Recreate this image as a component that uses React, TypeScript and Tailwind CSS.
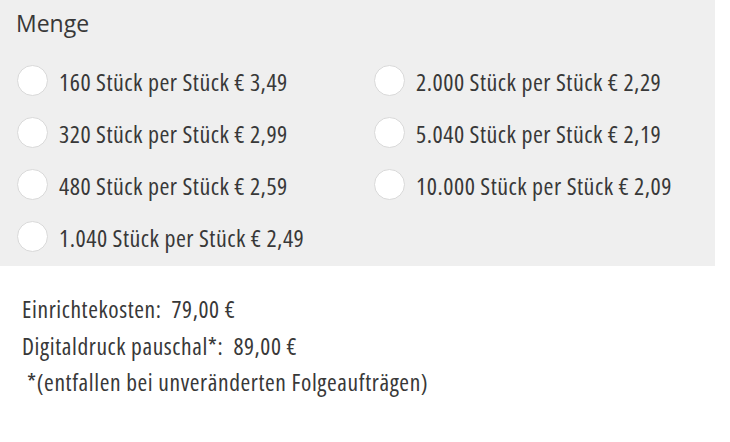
import React from "react";

const items: [string, string][] = [
  ["160 Stück per Stück € 3,49", "2.000 Stück per Stück € 2,29"],
  ["320 Stück per Stück € 2,99", "5.040 Stück per Stück € 2,19"],
  ["480 Stück per Stück € 2,59", "10.000 Stück per Stück € 2,09"],
  ["1.040 Stück per Stück € 2,49", ""],
];

function Option({ label }: { label: string }) {
  if (!label) return <div />;
  return (
    <label className="flex items-center h-[52px] cursor-pointer">
      <span className="w-[31px] h-[31px] rounded-full bg-white border border-[#d9d9d9] shrink-0" />
      <span className="ml-[11px] mt-[3px] text-[24px] tracking-[0.5px] font-stretch-condensed text-[#383838] whitespace-nowrap font-['Open_Sans',sans-serif]">
        {label}
      </span>
    </label>
  );
}

export default function App() {
  return (
    <div className="w-[730px] h-[442px] bg-white">
      <div className="w-[715px] h-[266px] bg-[#efefef] pl-[16px]">
        <div className="h-[54px] pt-[7px] text-[23px] leading-[32px] text-[#383838] font-['Open_Sans',sans-serif]">
          Menge
        </div>
        <div className="grid grid-cols-[357px_1fr] pl-px">
          {items.map(([a, b], i) => (
            <React.Fragment key={i}>
              <Option label={a} />
              <Option label={b} />
            </React.Fragment>
          ))}
        </div>
      </div>
      <div className="pl-[22px] pt-[25px] text-[23.5px] tracking-[0.6px] font-stretch-condensed leading-[36.5px] text-[#383838] font-['Open_Sans',sans-serif]">
        <div>Einrichtekosten:&nbsp; 79,00 €</div>
        <div>Digitaldruck pauschal*:&nbsp; 89,00 €</div>
        <div>&nbsp;*(entfallen bei unveränderten Folgeaufträgen)</div>
      </div>
    </div>
  );
}
